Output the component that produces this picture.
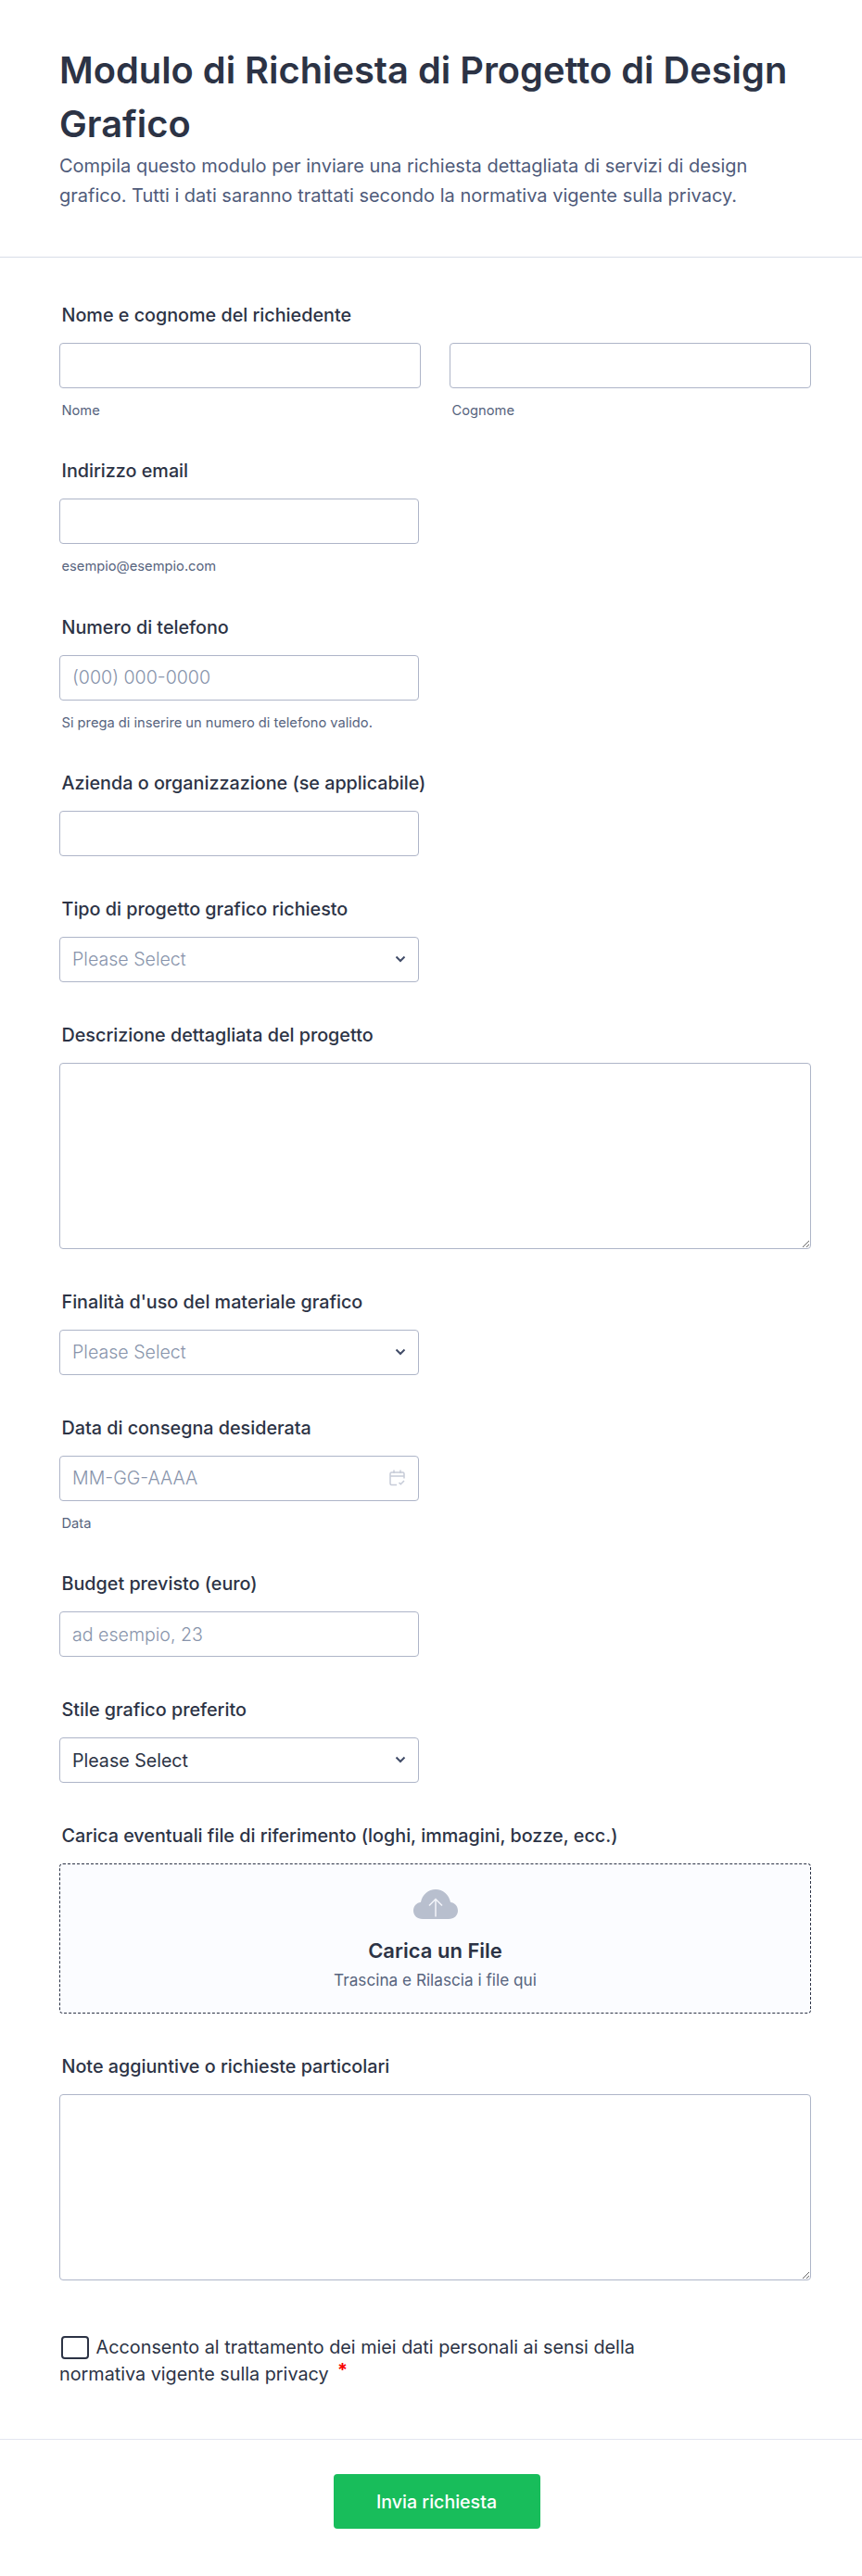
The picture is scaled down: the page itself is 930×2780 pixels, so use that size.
<main class="form">
	<header class="head">
		<h1>Modulo di Richiesta di Progetto di Design Grafico</h1>
		<p>Compila questo modulo per inviare una richiesta dettagliata di servizi di design grafico. Tutti i dati saranno trattati secondo la normativa vigente sulla privacy.</p>
	</header>

	<section class="fields">
		<div class="field">
			<label class="lbl" for="nome">Nome e cognome del richiedente</label>
			<div class="two">
				<div>
					<input id="nome" type="text" />
					<span class="sub">Nome</span>
				</div>
				<div>
					<input id="cognome" type="text" />
					<span class="sub">Cognome</span>
				</div>
			</div>
		</div>

		<div class="field short">
			<label class="lbl" for="email">Indirizzo email</label>
			<input id="email" type="email" />
			<span class="sub">esempio@esempio.com</span>
		</div>

		<div class="field short">
			<label class="lbl" for="tel">Numero di telefono</label>
			<input id="tel" type="tel" placeholder="(000) 000-0000" />
			<span class="sub">Si prega di inserire un numero di telefono valido.</span>
		</div>

		<div class="field short">
			<label class="lbl" for="azienda">Azienda o organizzazione (se applicabile)</label>
			<input id="azienda" type="text" />
		</div>

		<div class="field short">
			<label class="lbl" for="tipo">Tipo di progetto grafico richiesto</label>
			<div class="sel">
				<select id="tipo" class="empty"><option>Please Select</option></select>
				<svg class="chev" viewBox="0 0 12 8" width="12" height="8"><path d="M1.5 1.5 6 6l4.500-4.500" fill="none" stroke="#414c68" stroke-width="2" /></svg>
			</div>
		</div>

		<div class="field">
			<label class="lbl" for="descr">Descrizione dettagliata del progetto</label>
			<textarea id="descr"></textarea>
		</div>

		<div class="field short">
			<label class="lbl" for="finalita">Finalità d'uso del materiale grafico</label>
			<div class="sel">
				<select id="finalita" class="empty"><option>Please Select</option></select>
				<svg class="chev" viewBox="0 0 12 8" width="12" height="8"><path d="M1.5 1.5 6 6l4.500-4.500" fill="none" stroke="#414c68" stroke-width="2" /></svg>
			</div>
		</div>

		<div class="field short">
			<label class="lbl" for="data">Data di consegna desiderata</label>
			<div class="sel">
				<input id="data" type="text" placeholder="MM-GG-AAAA" />
				<svg class="cal" viewBox="0 0 17 18" width="17" height="18" fill="none" stroke="#c6cbd8" stroke-width="1.500">
					<path d="M16 9.500V4.500A1.500 1.500 0 0 0 14.500 3h-12A1.500 1.500 0 0 0 1 4.500V15a1.500 1.500 0 0 0 1.500 1.500H8" />
					<path d="M1 7h15M5 .5V4M12 .5V4M10.500 14l1.800 1.800 3.700-3.800" />
				</svg>
			</div>
			<span class="sub">Data</span>
		</div>

		<div class="field short">
			<label class="lbl" for="budget">Budget previsto (euro)</label>
			<input id="budget" type="text" placeholder="ad esempio, 23" />
		</div>

		<div class="field short">
			<label class="lbl" for="stile">Stile grafico preferito</label>
			<div class="sel">
				<select id="stile"><option>Please Select</option></select>
				<svg class="chev" viewBox="0 0 12 8" width="12" height="8"><path d="M1.5 1.5 6 6l4.500-4.500" fill="none" stroke="#414c68" stroke-width="2" /></svg>
			</div>
		</div>

		<div class="field">
			<span class="lbl">Carica eventuali file di riferimento (loghi, immagini, bozze, ecc.)</span>
			<div class="drop">
				<svg viewBox="0 0 48 32" width="48" height="32">
					<path d="M10 32C4 32 0 28 0 23 0 18 3.500 14.500 8 13.800 9.500 6 16 0 24 0 32 0 38.500 6 40 13.800 44.500 14.500 48 18 48 23 48 28 44 32 38 32Z" fill="#b8bfce" />
					<path d="M24 29.500V10.500M17 17.500l7-7 7 7" fill="none" stroke="#f3f5fa" stroke-width="1.500" />
				</svg>
				<strong>Carica un File</strong>
				<span>Trascina e Rilascia i file qui</span>
			</div>
		</div>

		<div class="field">
			<label class="lbl" for="note">Note aggiuntive o richieste particolari</label>
			<textarea id="note"></textarea>
		</div>

		<div class="consent">
			<input id="ok" type="checkbox" />
			<label for="ok">Acconsento al trattamento dei miei dati personali ai sensi della normativa vigente sulla privacy <span class="req">*</span></label>
		</div>
	</section>

	<footer class="foot">
		<button type="button">Invia richiesta</button>
	</footer>
</main>

<style>
	:global(body) { margin: 0; background: #fff; }
	.form { width: 930px; font-family: Inter, "Liberation Sans", sans-serif; color: #2c3345; }
	.head { padding: 47px 64px 50px; border-bottom: 1px solid #d8dde8; }
	h1 { margin: 0; font-size: 39.8px; line-height: 58px; font-weight: 600; color: #2c3345; }
	.head p { margin: 0; font-size: 20px; line-height: 32px; color: #4f5b7a; }
	.fields { padding: 50px 55px 0 64px; }
	.field { margin-bottom: 45px; }
	.short { width: 388px; }
	.lbl { display: block; margin: 0 0 18px 2.500px; font-size: 19.75px; line-height: 24px; font-weight: 500; color: #2c3345; white-space: nowrap; }
	.two { display: grid; grid-template-columns: 390px 390px; gap: 31px; }
	input, select, textarea { display: block; box-sizing: border-box; width: 100%; font-family: inherit; font-size: 19.6px; color: #2c3345; background: #fff; border: 1px solid #aeb5c8; border-radius: 4px; outline: none; margin: 0; }
	input, select { height: 49px; padding: 0 13px; }
	select { appearance: none; }
	select.empty { color: #8894ab; font-weight: 300; }
	input::placeholder { color: #8894ab; opacity: 1; font-weight: 300; }
	textarea { height: 201px; padding: 8px 12px; resize: vertical; }
	.sub { display: block; margin: 16px 0 0 2.500px; font-size: 14.7px; line-height: 16.3px; color: #57647e; }
	.sel { position: relative; }
	.chev { position: absolute; right: 14px; top: 20px; }
	.cal { position: absolute; right: 15px; top: 15px; }
	.drop { box-sizing: border-box; height: 162px; display: flex; flex-direction: column; align-items: center; padding-top: 27px; background: #fbfcff; border: 1px dashed #2c3345; border-radius: 4px; }
	.drop strong { margin-top: 20px; font-size: 22px; line-height: 28px; font-weight: 600; }
	.drop span { margin-top: 7px; font-size: 17.2px; line-height: 22px; color: #57647e; }
	.consent { box-sizing: border-box; width: 640px; margin-top: 58px; font-size: 19.8px; line-height: 29px; color: #2c3345; padding-bottom: 55px; }
	.consent input { display: inline-block; appearance: none; width: 25px; height: 25px; margin: 0 2px 0 2px; border: 2px solid #2c3345; border-radius: 4px; vertical-align: -6px; }
	.req { margin-left: 4px; color: #f80000; font-weight: 700; line-height: 0; vertical-align: 4px; }
	.foot { display: flex; justify-content: center; padding: 37px 0 50px 12px; border-top: 1px solid #e3e5f0; }
	button { width: 223px; height: 59px; border: none; border-radius: 4px; background: #18bd5b; color: #fff; font-family: inherit; font-size: 19.6px; font-weight: 500; }
</style>
